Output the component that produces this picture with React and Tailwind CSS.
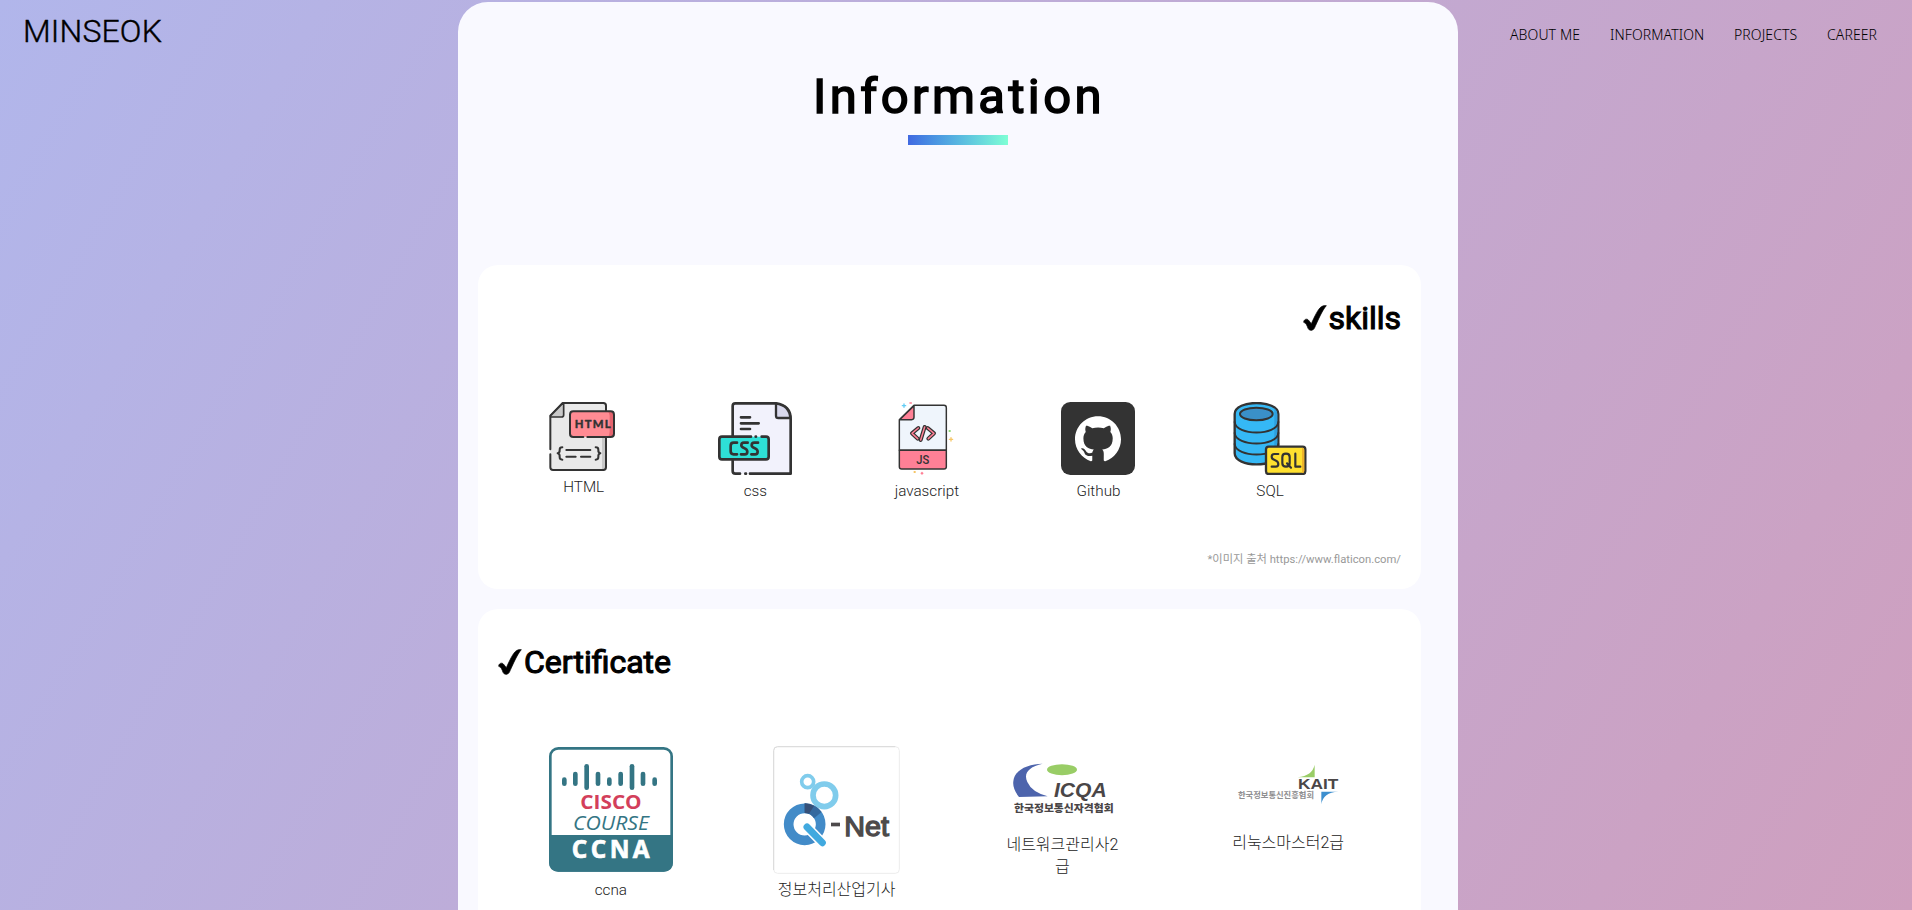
const NAV = [
  { label: "ABOUT ME", width: "w-[70px]" },
  { label: "INFORMATION", width: "w-[94px]" },
  { label: "PROJECTS", width: "w-[63px]" },
  { label: "CAREER", width: "w-[51px]" },
];

function HtmlIcon() {
  return (
    <svg className="block h-[69px] w-[74px]" viewBox="78 66 222 207" fill="none" stroke="#333" strokeWidth="6" strokeLinecap="round" strokeLinejoin="round">
      <path d="M131 69H252Q258 69 258 75V264Q258 270 252 270H97Q91 270 91 264V110Z" fill="#e9e9e9" stroke="none" />
      <path d="M246 172H258V264Q258 270 246 270Z" fill="#c8c8c8" stroke="none" />
      <path d="M91 208V107L128 69H250Q258 69 258 77V92M258 173V262Q258 270 250 270H99Q91 270 91 262V223" />
      <path d="M92 111V107L128 70L131 73V105Q131 111 125 111Z" fill="#c8c8c8" strokeWidth="5" />
      <rect x="150" y="94" width="132" height="77" rx="10" fill="#ff8b93" stroke="none" />
      <path d="M263 94H272Q282 94 282 104V161Q282 171 272 171H263Q269 165 269 155V107Q268 98 263 94Z" fill="#e5646e" stroke="none" />
      <path d="M190 171H160Q150 171 150 161V104Q150 94 160 94H272Q282 94 282 104V161Q282 171 272 171H202" />
      <text x="164" y="145" fontFamily="Lato, sans-serif" fontWeight="900" fontSize="34" textLength="108" fill="#333" stroke="#333" strokeWidth="1">HTML</text>
      <path d="M127 202Q119 202 119 209Q120 219 113 220Q120 221 119 232Q119 239 127 239M227 202Q235 202 235 209Q234 219 241 220Q234 221 235 232Q235 239 227 239M139 210H211M139 230H167M183 230H211" />
    </svg>
  );
}

function CssIcon() {
  return (
    <svg className="block h-[73px] w-[74px]" viewBox="594 66 222 219" fill="none" stroke="#333" strokeWidth="8" strokeLinecap="round" strokeLinejoin="round">
      <path d="M644 70H768L812 112V281H644Q638 281 638 275V76Q638 70 644 70Z" fill="#f2f2fc" stroke="none" />
      <path d="M638 168V78Q638 70 646 70H768Q812 76 812 118V281H690M660 281H646Q638 281 638 273V242" />
      <path d="M768 71V107Q768 114 775 114H811Q808 76 768 71Z" fill="#d8d8ec" strokeWidth="7" />
      <path d="M663 112H690M663 130H716M663 147H690" />
      <rect x="598" y="170" width="148" height="68" rx="5" fill="#2ee0d7" stroke="none" />
      <path d="M693 170H606Q598 170 598 178V230Q598 238 606 238H738Q746 238 746 230V178Q746 170 738 170H725M707 170H708M676 281H678" />
      <path d="M651 188H641Q632 188 632 197V214Q632 223 641 223H651M683 188H672Q664 188 664 196Q664 201 672 204Q682 208 682 215Q682 223 674 223H663M714 188H703Q695 188 695 196Q695 201 703 204Q713 208 713 215Q713 223 705 223H694" />
    </svg>
  );
}

function JsIcon() {
  return (
    <svg className="block h-[73px] w-[74px]" viewBox="88 66 222 219" fill="none" stroke="#333" strokeWidth="4.4" strokeLinecap="round" strokeLinejoin="round">
      <path d="M163 76H253Q260 76 260 83V211H119V119Z" fill="#eff5fc" />
      <path d="M119 211H260V260Q260 267 253 267H126Q119 267 119 260Z" fill="#ff8096" />
      <path d="M163 77V112Q163 119 156 119H120Z" fill="#ff8096" />
      <path d="M176 144L157 160L174 176M204 144L223 160L206 176M195 141L183 180" strokeWidth="12" />
      <path d="M176 144L157 160L174 176M204 144L223 160L206 176M195 141L183 180" stroke="#ff8096" strokeWidth="4.5" />
      <text x="170" y="252" fontFamily="Roboto, sans-serif" fontWeight="500" fontSize="38" textLength="39" lengthAdjust="spacingAndGlyphs" fill="#333" stroke="none">JS</text>
      <path d="M133 72V82M128 77H138" stroke="#63cdf5" strokeWidth="4" />
      <path d="M151 69H155M185 280H189M187 278V282" stroke="#ff8096" strokeWidth="5" />
      <path d="M274 173V183M269 178H279" stroke="#f6c667" strokeWidth="4" />
      <path d="M162 276H168" stroke="#f6c667" strokeWidth="6" strokeLinecap="butt" />
      <path d="M267 153H273" stroke="#8fda79" strokeWidth="6" strokeLinecap="butt" />
    </svg>
  );
}

function GithubIcon() {
  return (
    <svg className="block h-[73px] w-[74px]" viewBox="603 66 222 219">
      <rect x="603" y="66" width="222" height="219" rx="28" fill="#333" />
      <path
        transform="translate(645 109) scale(8.625)"
        fill="#fff"
        d="M8 0C3.58 0 0 3.58 0 8c0 3.54 2.29 6.53 5.47 7.59.4.07.55-.17.55-.38 0-.19-.01-.82-.01-1.49-2.01.37-2.53-.49-2.69-.94-.09-.23-.48-.94-.82-1.13-.28-.15-.68-.52-.01-.53.63-.01 1.08.58 1.23.82.72 1.21 1.87.87 2.33.66.07-.52.28-.87.51-1.07-1.78-.2-3.64-.89-3.64-3.95 0-.87.31-1.59.82-2.15-.08-.2-.36-1.02.08-2.12 0 0 .67-.21 2.2.82.64-.18 1.32-.27 2-.27.68 0 1.36.09 2 .27 1.53-1.04 2.2-.82 2.2-.82.44 1.1.16 1.92.08 2.12.51.56.82 1.27.82 2.15 0 3.07-1.87 3.75-3.65 3.95.29.25.54.73.54 1.48 0 1.07-.01 1.93-.01 2.2 0 .21.15.46.55.38A8.013 8.013 0 0016 8c0-4.42-3.58-8-8-8z"
      />
    </svg>
  );
}

function SqlIcon() {
  return (
    <svg className="block h-[73px] w-[74px]" viewBox="98 336 222 219" fill="none" stroke="#333" strokeWidth="7" strokeLinecap="round" strokeLinejoin="round">
      <path d="M103 372C103 328 234 328 234 372V490C234 534 103 534 103 490Z" fill="#35b8f5" />
      <path d="M222 354Q231 362 231 372V490Q228 504 215 510Q222 500 222 480Z" fill="#2f9fdd" stroke="none" />
      <ellipse cx="168" cy="372" rx="49" ry="19" fill="#3a90c8" strokeWidth="6" />
      <path d="M103 396C106 438 231 438 234 396M103 429C106 471 231 471 234 429M103 462C106 504 231 504 234 462" strokeWidth="6" />
      <rect x="197" y="470" width="118" height="82" rx="8" fill="#ffe02f" />
      <path d="M305 473Q312 473 312 480V542Q312 549 305 549Z" fill="#efb32a" stroke="none" />
      <path d="M234 492H222Q214 492 214 500Q214 507 223 510Q234 514 234 522Q234 530 226 530H214M246 501Q246 491 257 491Q268 491 268 501V520Q268 530 257 530Q246 530 246 520ZM260 520L272 533M285 491V530H300" strokeWidth="6.5" />
    </svg>
  );
}

function Check() {
  return (
    <svg className="-mt-[1px] block h-[26px] w-[24px] shrink-0" viewBox="0 0 72 78" fill="#000" stroke="#000" strokeWidth="2" strokeLinejoin="round">
      <path d="M2 52C2 43 12 39 17 46L25 56C35 34 45 12 55 5Q61 1 70 2C57 17 45 46 34 70Q30 77 23 76Q18 76 15 70C12 61 9 54 2 52Z" />
    </svg>
  );
}

const CISCO_BARS = [
  [283, 594, 618], [316, 577, 618], [350, 554, 630], [384, 577, 618], [418, 594, 618],
  [452, 577, 618], [486, 554, 630], [519, 577, 618], [554, 594, 618],
];

function CiscoLogo() {
  return (
    <svg className="mt-[1px] block h-[125px] w-[124px]" viewBox="237 502 372 375">
      <rect x="241" y="506" width="364" height="366" rx="24" fill="#fff" stroke="#347584" strokeWidth="8" />
      <path d="M237 766H609V848Q609 876 581 876H265Q237 876 237 848Z" fill="#347584" />
      {CISCO_BARS.map(([x, top, bottom]) => (
        <path key={x} d={`M${x} ${top + 6}V${bottom - 6}`} stroke="#347584" strokeWidth="14" strokeLinecap="round" />
      ))}
      <text x="331" y="689" fontFamily="'Open Sans', sans-serif" fontWeight="700" fontSize="61" textLength="184" lengthAdjust="spacingAndGlyphs" fill="#d33f5b">CISCO</text>
      <text x="309" y="752" fontFamily="'Open Sans', sans-serif" fontStyle="italic" fontSize="61" textLength="228" lengthAdjust="spacingAndGlyphs" fill="#347584">COURSE</text>
      <text x="305" y="836" fontFamily="'Open Sans', sans-serif" fontWeight="700" fontSize="73" textLength="234" fill="#fff" stroke="#fff" strokeWidth="2">CCNA</text>
    </svg>
  );
}

function QnetLogo() {
  return (
    <svg className="block h-[128px] w-[127px]" viewBox="99 47 381 384">
      <rect x="101" y="49" width="377" height="380" rx="12" fill="#fff" stroke="#ececec" strokeWidth="3" />
      <path d="M101 419V61Q101 49 113 49H466" fill="none" stroke="#dadada" strokeWidth="3" />
      <circle cx="203" cy="154" r="18" fill="none" stroke="#80ccec" strokeWidth="11" />
      <circle cx="253" cy="195" r="34" fill="none" stroke="#80ccec" strokeWidth="17" />
      <circle cx="194" cy="282" r="48" fill="none" stroke="#428bc8" strokeWidth="29" />
      <path d="M194 219Q226 219 245 245L222 264Q212 248 194 248Z" fill="#34699f" />
      <path d="M194 219Q208 219 222 227L207 250Q202 248 194 248Z" fill="#365078" />
      <path d="M201 290L247 337" stroke="#fff" strokeWidth="30" strokeLinecap="round" />
      <path d="M201 290L247 337" stroke="#41a9df" strokeWidth="21" strokeLinecap="round" />
      <rect x="273" y="277" width="27" height="11" fill="#4d4a4b" />
      <text x="313" y="317" fontFamily="'Liberation Sans', sans-serif" fontSize="84" textLength="134" lengthAdjust="spacingAndGlyphs" fill="#4d4a4b" stroke="#4d4a4b" strokeWidth="4">Net</text>
    </svg>
  );
}

function IcqaLogo() {
  return (
    <svg className="mt-[15px] ml-[1px] block h-[53px] w-[106px]" viewBox="90 62 318 159">
      <path d="M188 70C145 79 130 100 142 125Q155 155 203 168L117 170Q97 145 100 123C103 88 146 70 188 70Z" fill="#4d64ac" />
      <ellipse cx="246" cy="88" rx="45" ry="16.5" fill="#99cd66" />
      <text x="222" y="170" fontFamily="'Liberation Sans', sans-serif" fontStyle="italic" fontWeight="700" fontSize="62" textLength="158" lengthAdjust="spacingAndGlyphs" fill="#4a4647">ICQA</text>
      <text x="102" y="215" fontFamily="'Noto Sans CJK KR', sans-serif" fontWeight="900" fontSize="32" textLength="299" lengthAdjust="spacingAndGlyphs" fill="#4a4647">한국정보통신자격협회</text>
    </svg>
  );
}

function KaitLogo() {
  return (
    <svg className="mt-[16px] block h-[44px] w-[104px]" viewBox="77 67 312 132">
      <path d="M262 113Q306 108 313 75V113Z" fill="#99cd66" />
      <path d="M333 156H384Q338 158 333 194Z" fill="#3d8fcf" />
      <text x="263" y="148" fontFamily="'Liberation Sans', sans-serif" fontWeight="700" fontSize="43" textLength="121" lengthAdjust="spacingAndGlyphs" fill="#4a4647">KAIT</text>
      <text x="83" y="176" fontFamily="'Noto Sans CJK KR', sans-serif" fontWeight="700" fontSize="25" textLength="228" lengthAdjust="spacingAndGlyphs" fill="#8e8e90">한국정보통신진흥협회</text>
    </svg>
  );
}

const SKILLS = [
  { label: "HTML", Icon: HtmlIcon },
  { label: "css", Icon: CssIcon },
  { label: "javascript", Icon: JsIcon },
  { label: "Github", Icon: GithubIcon },
  { label: "SQL", Icon: SqlIcon },
];

const CERTIFICATES = [
  { label: "ccna", Logo: CiscoLogo, text: "mt-[7px] text-[15.25px] text-[#222]" },
  { label: "정보처리산업기사", Logo: QnetLogo, text: "mt-[5px] text-[16px] text-[#222]" },
  { label: "네트워크관리사2급", Logo: IcqaLogo, text: "mt-[20px] text-[16px] text-[#222]" },
  { label: "리눅스마스터2급", Logo: KaitLogo, text: "mt-[26px] text-[16px] text-[#222]" },
];

export default function App() {
  return (
    <div className="flex h-[910px] w-[1912px] overflow-hidden bg-[linear-gradient(120deg,#b1b6eb_0%,#cf9fbe_100%)] font-['Roboto','Noto_Sans_CJK_KR',sans-serif] text-black">
      <header className="w-[458px] shrink-0 pt-[12px] pl-[23px]">
        <h1 className="text-[32px] leading-[38px] font-light tracking-[0.15px] [-webkit-text-stroke:0.4px_#000]">MINSEOK</h1>
      </header>

      <main className="mt-[2px] h-[1100px] w-[1000px] shrink-0 rounded-[30px] bg-[#f9f9ff] px-[20px]">
        <div className="flex h-[263px] flex-col items-center pt-[65px]">
          <h2 className="ml-[2px] text-[49px] leading-[60px] tracking-[3.4px] [-webkit-text-stroke:1.6px_#000]">Information</h2>
          <div className="mt-[8px] h-[10px] w-[100px] bg-linear-to-r from-[#4169e1] to-[#7fffd4]" />
        </div>

        <section className="h-[324px] w-[943px] rounded-[20px] bg-white px-[20px] pt-[34px]">
          <div className="flex h-[38px] items-center justify-end gap-[1px]">
            <Check />
            <h3 className="text-[32px] leading-[38px] [-webkit-text-stroke:1.1px_#000]">skills</h3>
          </div>
          <ul className="mt-[65px] -ml-[0.6px] flex h-[134px] w-[858px]">
            {SKILLS.map(({ label, Icon }) => (
              <li key={label} className="flex flex-1 flex-col items-center">
                <Icon />
                <span className="mt-[6px] ml-[1px] text-[15.25px] leading-[20px] font-light text-[#222]">{label}</span>
              </li>
            ))}
          </ul>
          <p className="mt-[14px] text-right text-[11.25px] leading-[20px] text-[#999]">*이미지 출처 https://www.flaticon.com/</p>
        </section>

        <section className="mt-[20px] h-[420px] w-[943px] rounded-[20px] bg-white px-[20px] pt-[34px]">
          <div className="flex h-[38px] items-center gap-[2px]">
            <Check />
            <h3 className="text-[32px] leading-[38px] [-webkit-text-stroke:1.1px_#000]">Certificate</h3>
          </div>
          <ul className="mt-[65px] grid grid-cols-4">
            {CERTIFICATES.map(({ label, Logo, text }) => (
              <li key={label} className="flex flex-col items-center">
                <Logo />
                <span className={`${text} w-[125px] text-center leading-[22px] font-light break-all`}>{label}</span>
              </li>
            ))}
          </ul>
        </section>
      </main>

      <nav className="flex flex-1 items-start gap-[30px] pt-[25px] pl-[52px] font-['Noto_Sans',sans-serif] text-[14px] leading-[20px] font-light tracking-[0.1px] text-black">
        {NAV.map(({ label, width }) => (
          <a key={label} className={`${width} shrink-0 whitespace-nowrap`}>{label}</a>
        ))}
      </nav>
    </div>
  );
}
